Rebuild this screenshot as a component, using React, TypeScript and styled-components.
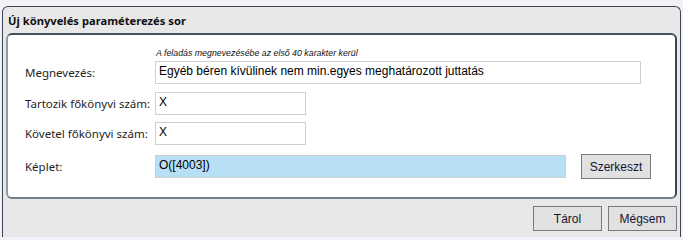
import React from "react";
import styled, { createGlobalStyle } from "styled-components";

const Global = createGlobalStyle`
  html, body { margin: 0; padding: 0; background: #f1f1f7; }
  body { width: 683px; height: 237px; overflow: hidden; }
`;

const Window = styled.div`
  margin: 6px 0 0 2px;
  width: 677px;
  height: 240px;
  background: #e8e8e8;
  border: 1px solid #3b4651;
  border-bottom: none;
  border-radius: 6px 6px 0 0;
  display: flex;
  flex-direction: column;
`;

const Title = styled.div`
  height: 26px;
  padding-left: 5px;
  display: flex;
  align-items: center;
  font-family: "Noto Sans", sans-serif;
  font-weight: 700;
  font-size: 11.2px;
  color: #111;
`;

const Panel = styled.div`
  box-sizing: border-box;
  margin: 0 3px;
  height: 166px;
  background: #fff;
  border-style: solid;
  border-width: 2px;
  border-color: #46515c #3b4651 #6f7f8c #8d9ba7;
  border-radius: 6px;
  padding: 12px 0 0 17px;
  display: flex;
  flex-direction: column;
`;

const Row = styled.div<{ $top: number; $end?: boolean }>`
  display: flex;
  align-items: ${(p) => (p.$end ? "flex-end" : "center")};
  margin-top: ${(p) => p.$top}px;
`;

const Label = styled.div<{ $pb?: number }>`
  width: 130px;
  flex: none;
  padding-bottom: ${(p) => p.$pb ?? 0}px;
  font-family: "Noto Sans", sans-serif;
  font-size: 11.5px;
  color: #1e1e1e;
`;

const FieldCol = styled.div`
  display: flex;
  flex-direction: column;
  gap: 2px;
`;

const Hint = styled.div`
  font-family: "Liberation Sans", Arial, sans-serif;
  font-style: italic;
  font-size: 8.8px;
  line-height: 12px;
  height: 12px;
  color: #111;
  margin-left: 1px;
`;

const Input = styled.div<{ $w: number; $bg?: string }>`
  box-sizing: border-box;
  width: ${(p) => p.$w}px;
  height: 23px;
  background: ${(p) => p.$bg ?? "#fff"};
  border: 1px solid #cfcfcf;
  padding: 1px 3px 0 3px;
  font-family: "Liberation Sans", Arial, sans-serif;
  font-size: 12px;
  line-height: 17px;
  color: #000;
  white-space: nowrap;
  overflow: hidden;
`;

const Button = styled.div<{ $w: number }>`
  box-sizing: border-box;
  width: ${(p) => p.$w}px;
  height: 25px;
  background: #e1e1e1;
  border: 1px solid #7a7a7a;
  display: flex;
  align-items: center;
  justify-content: center;
  font-family: "Liberation Sans", Arial, sans-serif;
  font-size: 12px;
  color: #151530;
`;

const Footer = styled.div`
  display: flex;
  justify-content: flex-end;
  gap: 6px;
  padding: 7px 3px 0 0;
`;

const FormulaRow = styled.div`
  display: flex;
  align-items: center;
  gap: 15px;
`;

export default function App() {
  return (
    <>
      <Global />
      <Window>
        <Title>Új könyvelés paraméterezés sor</Title>
        <Panel>
          <Row $top={0} $end>
            <Label $pb={4}>Megnevezés:</Label>
            <FieldCol>
              <Hint>A feladás megnevezésébe az első 40 karakter kerül</Hint>
              <Input $w={486}>
                Egyéb béren kívülinek nem min.egyes meghatározott juttatás
              </Input>
            </FieldCol>
          </Row>
          <Row $top={8}>
            <Label>Tartozik főkönyvi szám:</Label>
            <Input $w={151}>X</Input>
          </Row>
          <Row $top={7}>
            <Label>Követel főkönyvi szám:</Label>
            <Input $w={151}>X</Input>
          </Row>
          <Row $top={9}>
            <Label>Képlet:</Label>
            <FormulaRow>
              <Input $w={411} $bg="#b7e0f7">O([4003])</Input>
              <Button $w={70}>Szerkeszt</Button>
            </FormulaRow>
          </Row>
        </Panel>
        <Footer>
          <Button $w={69}>Tárol</Button>
          <Button $w={69}>Mégsem</Button>
        </Footer>
      </Window>
    </>
  );
}
